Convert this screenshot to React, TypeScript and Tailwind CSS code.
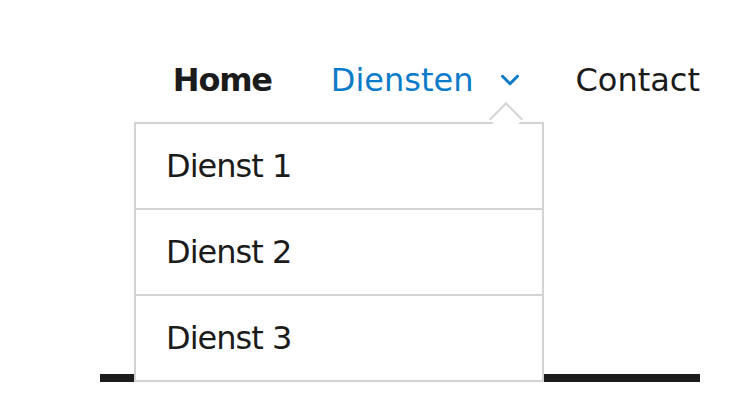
import { ChevronDown } from "lucide-react";

const services = ["Dienst 1", "Dienst 2", "Dienst 3"];

export default function App() {
  return (
    <div className="min-h-[410px] bg-white text-[#1b1b1b] [font-family:'DejaVu_Sans',sans-serif]">
      <header className="relative ml-[100px] w-[600px]">
        <nav className="flex h-[374px] items-start justify-end pt-[60px]">
          <ul className="flex h-10 items-center text-[32px] leading-10">
            <li className="font-bold tracking-[-1.2px]">Home</li>
            <li className="ml-[59px] flex items-center text-[#0a7bc8]">
              <span>Diensten</span>
              <ChevronDown className="ml-[21px] h-[30px] w-[30px]" strokeWidth={2.4} />
            </li>
            <li className="ml-[51px]">Contact</li>
          </ul>
        </nav>
        <div className="h-2 bg-[#1c1c1c]" />

        <div className="absolute left-[34px] top-[122px] z-10 w-[410px] border-2 border-[#d3d3d3] bg-white">
          <span className="absolute -top-[17px] left-[358px] h-6 w-6 rotate-45 border-l-2 border-t-2 border-[#d3d3d3] bg-white" />
          <ul className="relative text-[32px] tracking-[-1px]">
            {services.map((s, i) => (
              <li
                key={s}
                className={`flex items-center pl-[30px] ${i < services.length - 1 ? "h-[86px] border-b-2 border-[#d3d3d3]" : "h-[84px]"}`}
              >
                {s}
              </li>
            ))}
          </ul>
        </div>
      </header>
    </div>
  );
}
